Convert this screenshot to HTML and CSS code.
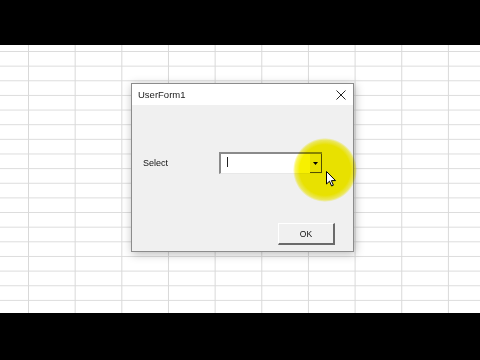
FILE: index.html
```html
<!DOCTYPE html>
<html lang="en">
<head>
  <meta charset="UTF-8">
  <title>UserForm1</title>
  <link rel="stylesheet" href="styles.css">
</head>
<body>
  <div class="bar"></div>
  <div class="sheet">
    <div class="dialog">
      <div class="titlebar">
        <span class="title">UserForm1</span>
        <svg class="close" width="10" height="10" viewBox="0 0 10 10">
          <path d="M0.5 0.5 L9.5 9.5 M9.5 0.5 L0.5 9.5" stroke="#222" stroke-width="1" fill="none"/>
        </svg>
      </div>
      <div class="body">
        <div class="row">
          <label class="label">Select</label>
          <div class="combo">
            <div class="combo-text"><span class="caret"></span></div>
            <div class="combo-btn">
              <svg width="5" height="3" viewBox="0 0 5 3"><path d="M0 0 H5 L2.5 3 Z" fill="#000"/></svg>
            </div>
          </div>
        </div>
        <div class="actions">
          <button class="ok">OK</button>
        </div>
      </div>
    </div>
    <div class="spot"></div>
    <svg class="pointer" width="11" height="17" viewBox="0 0 11 17">
      <path d="M0.5 0.5 L0.5 13 L3.5 10.2 L5.6 15 L7.4 14.2 L5.4 9.6 L9.5 9.6 Z" fill="#fff" stroke="#000" stroke-width="1" stroke-linejoin="round"/>
    </svg>
  </div>
  <div class="bar bottom"></div>
</body>
</html>
```

FILE: styles.css
```css
html, body {
  margin: 0;
  background: #000;
  font-family: "Liberation Sans", Arial, sans-serif;
}
.bar {
  height: 45px;
  background: #000;
}
.bar.bottom {
  height: 47px;
}
.sheet {
  position: relative;
  height: 268px;
  background-color: #fff;
  background-image:
    linear-gradient(to right, #d9d9d9 1px, transparent 1px),
    linear-gradient(to bottom, #dcdcdc 1px, transparent 1px);
  background-size: 46.67px 100%, 100% 14.65px;
  background-position: 28px 0, 0 6px;
  overflow: hidden;
}
.dialog {
  position: absolute;
  left: 131px;
  top: 38px;
  width: 221px;
  height: 167px;
  border: 1px solid #8c8c8c;
  background: #f0f0f0;
  box-shadow: 1px 2px 9px rgba(0, 0, 0, 0.28);
  display: flex;
  flex-direction: column;
}
.titlebar {
  height: 21px;
  background: #fff;
  display: flex;
  align-items: center;
  justify-content: space-between;
  padding: 0 7px 0 6px;
}
.title {
  font-size: 9.5px;
  color: #1a1a1a;
}
.body {
  flex: 1;
  padding: 47px 0 0 11px;
  display: flex;
  flex-direction: column;
}
.row {
  display: flex;
  align-items: center;
}
.label {
  width: 76px;
  font-size: 9px;
  color: #111;
}
.combo {
  width: 103px;
  height: 22px;
  box-sizing: border-box;
  display: flex;
  border-top: 2px solid #8a8a8a;
  border-left: 2px solid #8a8a8a;
  border-bottom: 1px solid #e8e8e8;
  background: #fff;
}
.combo-text {
  flex: 1;
  padding: 3px 0 0 6px;
}
.caret {
  display: block;
  width: 1px;
  height: 10px;
  background: #222;
}
.combo-btn {
  width: 11px;
  background: #f0f0f0;
  border-right: 1px solid #555;
  border-bottom: 1px solid #555;
  display: flex;
  align-items: center;
  justify-content: center;
}
.actions {
  display: flex;
  justify-content: flex-end;
  padding: 49px 18px 0 0;
}
.ok {
  width: 57px;
  height: 22px;
  box-sizing: border-box;
  background: #f0f0f0;
  border: 0;
  border-top: 1px solid #fff;
  border-left: 1px solid #fff;
  border-right: 2px solid #6a6a6a;
  border-bottom: 2px solid #6a6a6a;
  font-family: "Liberation Sans", Arial, sans-serif;
  font-size: 8.5px;
  color: #111;
  padding: 0;
}
.spot {
  position: absolute;
  left: 293px;
  top: 93px;
  width: 64px;
  height: 64px;
  border-radius: 50%;
  background: radial-gradient(circle, #f7f000 0, #f7f000 56%, rgba(247, 240, 0, 0.6) 66%, rgba(247, 240, 0, 0) 71%);
  mix-blend-mode: multiply;
}
.pointer {
  position: absolute;
  left: 326px;
  top: 126px;
}
```
